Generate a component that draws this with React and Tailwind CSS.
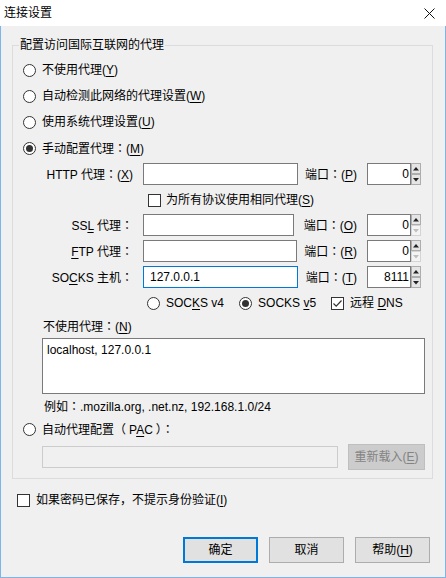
import { useState } from 'react';

const font = "font-['Liberation_Sans','Noto_Sans_CJK_SC',sans-serif]";

function Key({ children }) {
  return <u className="underline underline-offset-[2px]">{children}</u>;
}

// 全角冒号居中显示（与微软雅黑一致）
function Colon() {
  return <span className="font-['Noto_Sans_CJK_TC',sans-serif]">：</span>;
}

function Radio({ checked }) {
  return (
    <span className="flex h-[13px] w-[13px] shrink-0 items-center justify-center rounded-full border border-[#333333] bg-white">
      {checked && <span className="h-[7px] w-[7px] rounded-full bg-[#333333]" />}
    </span>
  );
}

function Checkbox({ checked }) {
  return (
    <span className="flex h-[13px] w-[13px] shrink-0 items-center justify-center border border-[#333333] bg-white">
      {checked && (
        <svg width="11" height="11" viewBox="0 0 11 11">
          <path d="M1.5 5.5 L4.2 8.2 L9.5 2.5" fill="none" stroke="#333333" strokeWidth="1.2" />
        </svg>
      )}
    </span>
  );
}

function Arrow({ down, disabled }) {
  return (
    <div
      className={
        'flex h-[11px] w-[10px] items-center justify-center border ' +
        (disabled ? 'border-[#d4d4d4] bg-[#f4f4f4]' : 'border-[#adadad] bg-[#e5e5e5]')
      }
    >
      <svg width="6" height="4" viewBox="0 0 6 4">
        <path d={down ? 'M0 0 L6 0 L3 3.5 Z' : 'M0 3.5 L6 3.5 L3 0 Z'} fill={disabled ? '#bfbfbf' : '#222222'} />
      </svg>
    </div>
  );
}

function Spin({ value, atMin }) {
  return (
    <div className="flex h-[22px]">
      <div className="w-[44px] border border-[#7a7a7a] bg-white pr-[1px] text-right leading-[20px]">{value}</div>
      <div className="flex flex-col">
        <Arrow />
        <Arrow down disabled={atMin} />
      </div>
    </div>
  );
}

function ProxyRow({ label, inputWidth, gapWidth, portLabel, host, port, atMin, focused, className }) {
  return (
    <div className={'flex h-[22px] items-center ' + className}>
      <div className="w-[120px] text-right">{label}</div>
      <div
        style={{ width: inputWidth }}
        className={
          'ml-[10px] h-[22px] border bg-white pl-[6px] leading-[20px] ' +
          (focused ? 'border-[#0078d7]' : 'border-[#7a7a7a]')
        }
      >
        {host}
      </div>
      <div style={{ width: gapWidth }} className="pr-[10px] text-right">
        {portLabel}
      </div>
      <Spin value={port} atMin={atMin} />
    </div>
  );
}

export default function App() {
  const [mode] = useState('manual');

  return (
    <div className={`${font} flex h-[578px] w-[446px] flex-col text-[12px] leading-4 text-black`}>
      {/* 标题栏 */}
      <div className="flex h-[26px] shrink-0 items-center justify-between bg-white pl-[4px] pr-[11px]">
        <span>连接设置</span>
        <svg width="11" height="11" viewBox="0 0 11 11">
          <path d="M0.5 0.5 L10.5 10.5 M10.5 0.5 L0.5 10.5" stroke="#111111" strokeWidth="1" />
        </svg>
      </div>

      <div className="flex flex-1 flex-col border-x border-b border-[#7eb4ea] bg-[#f0f0f0]">
        <fieldset className="ml-[11px] mt-[11px] w-[421px] border border-[#dcdcdc] pb-[8px]">
          <legend className="ml-[6px] px-[1px]">配置访问国际互联网的代理</legend>

          <div className="ml-[10px] mt-[9px] flex flex-col gap-[10px]">
            <div className="flex h-4 items-center gap-[6px]">
              <Radio checked={mode === 'none'} />
              <span>
                不使用代理(<Key>Y</Key>)
              </span>
            </div>
            <div className="flex h-4 items-center gap-[6px]">
              <Radio checked={mode === 'auto'} />
              <span>
                自动检测此网络的代理设置(<Key>W</Key>)
              </span>
            </div>
            <div className="flex h-4 items-center gap-[6px]">
              <Radio checked={mode === 'system'} />
              <span>
                使用系统代理设置(<Key>U</Key>)
              </span>
            </div>
            <div className="flex h-4 items-center gap-[6px]">
              <Radio checked={mode === 'manual'} />
              <span>
                手动配置代理<Colon />(<Key>M</Key>)
              </span>
            </div>
          </div>

          <ProxyRow
            className="mt-[7px]"
            label={<>HTTP 代理<Colon />(<Key>X</Key>)</>}
            inputWidth={155}
            gapWidth={69}
            portLabel={<>端口<Colon />(<Key>P</Key>)</>}
            port="0"
          />

          <div className="ml-[135px] mt-[7px] flex h-4 items-center gap-[5px]">
            <Checkbox />
            <span>
              为所有协议使用相同代理(<Key>S</Key>)
            </span>
          </div>

          <ProxyRow
            className="mt-[6px]"
            label={<>SS<Key>L</Key> 代理<Colon /></>}
            inputWidth={151}
            gapWidth={73}
            portLabel={<>端口<Colon />(<Key>O</Key>)</>}
            port="0"
            atMin
          />
          <ProxyRow
            className="mt-[4px]"
            label={<><Key>F</Key>TP 代理<Colon /></>}
            inputWidth={154}
            gapWidth={70}
            portLabel={<>端口<Colon />(<Key>R</Key>)</>}
            port="0"
            atMin
          />
          <ProxyRow
            className="mt-[4px]"
            label={<>SO<Key>C</Key>KS 主机<Colon /></>}
            inputWidth={155}
            gapWidth={69}
            portLabel={<>端口<Colon />(<Key>T</Key>)</>}
            host="127.0.0.1"
            port="8111"
            focused
          />

          <div className="ml-[134px] mt-[7px] flex h-4 items-center">
            <Radio />
            <span className="ml-[6px]">
              SOC<Key>K</Key>S v4
            </span>
            <span className="ml-[15px]">
              <Radio checked />
            </span>
            <span className="ml-[6px]">
              SOCKS <Key>v</Key>5
            </span>
            <span className="ml-[15px]">
              <Checkbox checked />
            </span>
            <span className="ml-[6px]">
              远程 <Key>D</Key>NS
            </span>
          </div>

          <div className="ml-[30px] mt-[7px] h-4">
            不使用代理<Colon />(<Key>N</Key>)
          </div>
          <div className="ml-[29px] mt-[4px] h-[56px] w-[383px] border border-[#7a7a7a] bg-white px-[4px] pt-[3px]">
            localhost, 127.0.0.1
          </div>
          <div className="ml-[31px] mt-[4px] h-4">
            例如<Colon />.mozilla.org, .net.nz, 192.168.1.0/24
          </div>

          <div className="ml-[10px] mt-[7px] flex h-4 items-center gap-[6px]">
            <Radio checked={mode === 'pac'} />
            <span>
              自动代理配置（<span className="ml-[3px]">P<Key>A</Key>C</span>
              <span className="ml-[3px]">）</span>
              <Colon />
            </span>
          </div>

          <div className="ml-[29px] mt-[7px] flex h-[26px] items-center gap-[10px]">
            <div className="h-[22px] w-[296px] border border-[#cccccc] bg-[#f0f0f0]" />
            <button className="h-[26px] w-[77px] border border-[#bfbfbf] bg-[#cccccc] text-[#838383]">
              重新载入(<Key>E</Key>)
            </button>
          </div>
        </fieldset>

        <div className="ml-[16px] mt-[13px] flex h-4 items-center gap-[6px]">
          <Checkbox />
          <span>
            如果密码已保存，不提示身份验证(<Key>I</Key>)
          </span>
        </div>

        <div className="mr-[15px] mt-[29px] flex justify-end gap-[11px]">
          <button className="h-[26px] w-[75px] border-2 border-[#0078d7] bg-[#e1e1e1]">确定</button>
          <button className="h-[26px] w-[75px] border border-[#adadad] bg-[#e1e1e1]">取消</button>
          <button className="h-[26px] w-[75px] border border-[#adadad] bg-[#e1e1e1]">
            帮助(<Key>H</Key>)
          </button>
        </div>
      </div>
    </div>
  );
}
